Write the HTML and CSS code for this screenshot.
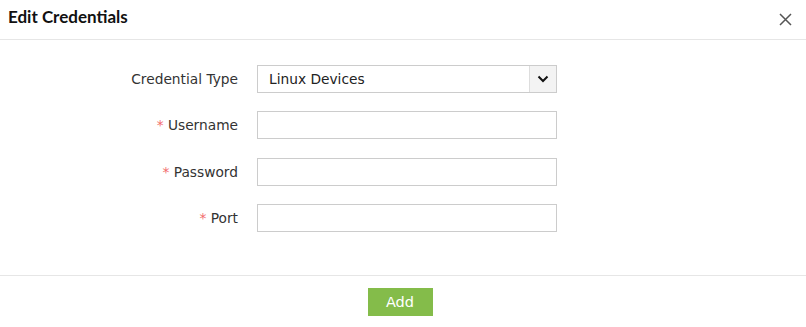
FILE: index.html
```html
<!DOCTYPE html>
<html lang="en">
<head>
    <meta charset="UTF-8">
    <title>Edit Credentials</title>
    <link rel="stylesheet" href="styles.css">
</head>
<body>
    <!-- Dialog Header -->
    <div class="dialog-header">
        <div class="dialog-title">Edit Credentials</div>
        <button class="close-btn">
            <svg width="13" height="13" viewBox="0 0 13 13">
                <path d="M1 1 L12 12 M12 1 L1 12" stroke="#555" stroke-width="1.5" fill="none"/>
            </svg>
        </button>
    </div>

    <!-- Form -->
    <form class="cred-form">
        <div class="form-row">
            <label class="form-label">Credential Type</label>
            <div class="select-box">
                <span class="select-value">Linux Devices</span>
                <span class="select-arrow">
                    <svg width="12" height="8" viewBox="0 0 12 8">
                        <path d="M1.5 1.5 L6 6 L10.5 1.5" stroke="#111" stroke-width="2" fill="none"/>
                    </svg>
                </span>
            </div>
        </div>
        <div class="form-row">
            <label class="form-label"><span class="req">*</span> Username</label>
            <input type="text" class="form-input">
        </div>
        <div class="form-row">
            <label class="form-label"><span class="req">*</span> Password</label>
            <input type="password" class="form-input">
        </div>
        <div class="form-row">
            <label class="form-label"><span class="req">*</span> Port</label>
            <input type="text" class="form-input">
        </div>
    </form>

    <!-- Footer -->
    <div class="dialog-footer">
        <button class="add-btn">Add</button>
    </div>
</body>
</html>
```

FILE: styles.css
```css
/* Global Styles */
body, html {
    margin: 0;
    padding: 0;
    background: white;
    font-family: "DejaVu Sans", Verdana, sans-serif;
    color: #333;
}

/* Header */
.dialog-header {
    height: 39px;
    border-bottom: 1px solid #e6e6e6;
    display: flex;
    align-items: center;
    justify-content: space-between;
    padding: 0 14px 0 8px;
}

.dialog-title {
    font-family: Lato, sans-serif;
    font-weight: bold;
    font-size: 17px;
    color: #111;
    margin-top: -6px;
}

.close-btn {
    background: none;
    border: none;
    padding: 0;
    display: flex;
    cursor: pointer;
}

/* Form */
.cred-form {
    padding: 25px 0 43px;
    display: flex;
    flex-direction: column;
    gap: 18.33px;
}

.form-row {
    display: flex;
    align-items: center;
    gap: 19px;
}

.form-label {
    width: 238px;
    text-align: right;
    font-size: 13.75px;
    color: #333;
}

.req {
    color: #f26b6b;
}

.form-input, .select-box {
    width: 300px;
    height: 28px;
    box-sizing: border-box;
    border: 1px solid #cccccc;
    margin: 0;
    font-size: 13.75px;
}

.select-box {
    display: flex;
    align-items: stretch;
}

.select-value {
    flex: 1;
    padding-left: 11px;
    display: flex;
    align-items: center;
    color: #222;
}

.select-arrow {
    width: 26px;
    background: #f3f3f3;
    border-left: 1px solid #dddddd;
    display: flex;
    align-items: center;
    justify-content: center;
}

/* Footer */
.dialog-footer {
    border-top: 1px solid #e6e6e6;
    padding-top: 12px;
    display: flex;
    justify-content: center;
}

.add-btn {
    width: 65px;
    height: 28px;
    margin-right: 6px;
    border: none;
    background: #84bc4a;
    color: white;
    font-family: "DejaVu Sans", Verdana, sans-serif;
    font-size: 14.5px;
    cursor: pointer;
}
```
